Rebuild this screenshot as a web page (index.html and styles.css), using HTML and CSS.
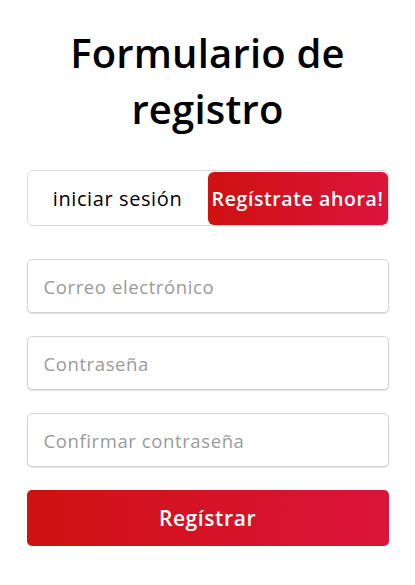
FILE: index.html
```html
<!DOCTYPE html>
<html lang="es">
<head>
<meta charset="utf-8">
<title>Formulario de registro</title>
<link rel="stylesheet" href="styles.css">
</head>
<body>
<main class="wrapper">
  <h1 class="title">Formulario de registro</h1>
  <div class="tabs">
    <button class="tab" type="button">iniciar sesión</button>
    <button class="tab tab-active" type="button">Regístrate ahora!</button>
  </div>
  <form class="form">
    <input class="field" type="email" placeholder="Correo electrónico">
    <input class="field" type="password" placeholder="Contraseña">
    <input class="field" type="password" placeholder="Confirmar contraseña">
    <button class="submit" type="submit">Regístrar</button>
  </form>
</main>
</body>
</html>
```
FILE: styles.css
```css
* { box-sizing: border-box; }
html, body { margin: 0; background: #fff; }
body {
  font-family: "Open Sans", "Noto Sans", sans-serif;
  color: #000;
}
.wrapper {
  width: 362px;
  margin: 0 auto;
  padding-top: 25px;
}
.title {
  margin: 0;
  font-size: 40px;
  line-height: 56px;
  font-weight: 600;
  text-align: center;
  letter-spacing: 0.2px;
  color: #000;
}
.tabs {
  display: flex;
  margin-top: 33px;
  height: 56px;
  border: 1px solid #d9d9d9;
  border-radius: 6px;
  padding: 1px 0 0 0;
}
.tab {
  flex: 1;
  border: 0;
  background: transparent;
  font-family: inherit;
  font-size: 20px;
  letter-spacing: 0.6px;
  color: #000;
  border-radius: 6px;
  padding: 0;
  cursor: pointer;
}
.tab-active {
  color: #fff;
  font-weight: 600;
  font-size: 19.5px;
  letter-spacing: 0.6px;
  background: linear-gradient(to right, #cf1111, #dc143c);
}
.form {
  display: flex;
  flex-direction: column;
  gap: 23px;
  margin-top: 33px;
}
.field {
  height: 54px;
  border: 1px solid #d4d4d4;
  border-radius: 5px;
  box-shadow: 0 1px 1px rgba(0,0,0,0.12);
  padding: 0 16px;
  font-family: inherit;
  font-size: 18.5px;
  letter-spacing: 0.6px;
  color: #000;
}
.field::placeholder { color: #9a9a9a; }
.submit {
  height: 56px;
  border: 0;
  border-radius: 5px;
  background: linear-gradient(to right, #cf1111, #dc143c);
  color: #fff;
  font-family: inherit;
  font-size: 21px;
  font-weight: 600;
  letter-spacing: 0.6px;
  cursor: pointer;
}
```
